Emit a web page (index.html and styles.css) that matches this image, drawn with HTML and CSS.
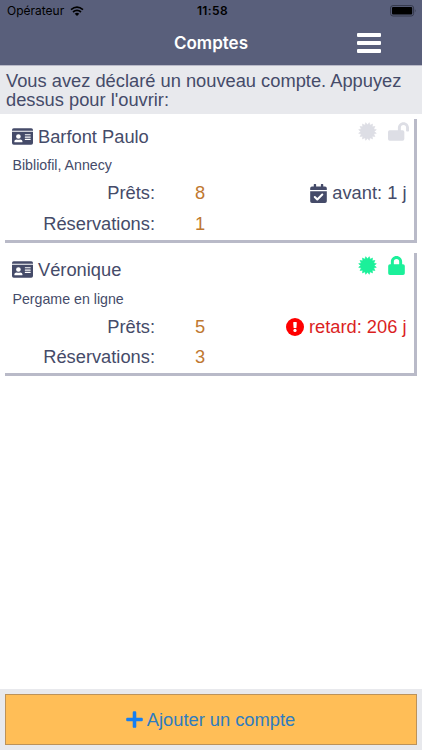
FILE: index.html
```html
<!DOCTYPE html>
<html lang="fr">
  <head>
    <meta charset="utf-8">
    <meta name="viewport" content="width=device-width, initial-scale=1">
    <title>Comptes</title>
    <link rel="stylesheet" href="styles.css">
  </head>
  <body>
    <!-- shared icons -->
    <svg class="sprite" width="0" height="0">
      <symbol id="id-card" viewBox="0 0 576 512">
        <path fill-rule="evenodd" d="M48 32h480a48 48 0 0 1 48 48v16H0V80a48 48 0 0 1 48-48zM0 128h576v304a48 48 0 0 1-48 48H48a48 48 0 0 1-48-48zM176 192a64 64 0 1 0 0 128 64 64 0 0 0 0-128zM64 400c0 9 7 16 16 16h192c9 0 16-7 16-16 0-38-29-60-66-60-14 4-30 8-46 8s-32-4-46-8c-37 0-66 22-66 60zM360 192h144q8 0 8 8v16q0 8-8 8H360q-8 0-8-8v-16q0-8 8-8zM360 256h144q8 0 8 8v16q0 8-8 8H360q-8 0-8-8v-16q0-8 8-8zM360 320h144q8 0 8 8v16q0 8-8 8H360q-8 0-8-8v-16q0-8 8-8z"/>
      </symbol>
      <symbol id="seal" viewBox="-10 -10 20 20">
        <path stroke-width=".6" stroke-linejoin="round" stroke="currentColor" d="M0-7.1L1.9-9.3L2.7-6.5L5.3-7.9L5-5L7.9-5.3L6.5-2.7L9.3-1.9L7.1 0L9.3 1.9L6.5 2.7L7.9 5.3L5 5L5.3 7.9L2.7 6.5L1.9 9.3L0 7.1L-1.9 9.3L-2.7 6.5L-5.3 7.9L-5 5L-7.9 5.3L-6.5 2.7L-9.3 1.9L-7.1 0L-9.3-1.9L-6.5-2.7L-7.9-5.3L-5-5L-5.3-7.9L-2.7-6.5L-1.9-9.3z"/>
      </symbol>
      <symbol id="lock" viewBox="0 0 448 512">
        <path fill-rule="evenodd" d="M400 224h-24v-72C376 68 308 0 224 0S72 68 72 152v72H48a48 48 0 0 0-48 48v192a48 48 0 0 0 48 48h352a48 48 0 0 0 48-48V272a48 48 0 0 0-48-48zm-104 0H152v-72a72 72 0 0 1 144 0z"/>
      </symbol>
      <symbol id="lock-open" viewBox="0 0 576 512">
        <path d="M424 0c-84 0-152 69-152 153v71H48a48 48 0 0 0-48 48v192a48 48 0 0 0 48 48h352a48 48 0 0 0 48-48V272a48 48 0 0 0-48-48h-48v-71a72 72 0 0 1 144-1v80c0 13 11 24 24 24h32c13 0 24-11 24-24v-80C576 68 508 0 424 0z"/>
      </symbol>
      <symbol id="calendar" viewBox="0 0 448 512">
        <path d="M48 64h48V12q0-12 12-12h40q12 0 12 12v52h128V12q0-12 12-12h40q12 0 12 12v52h48a48 48 0 0 1 48 48v48H0v-48a48 48 0 0 1 48-48zM0 192h448v272a48 48 0 0 1-48 48H48a48 48 0 0 1-48-48z"/>
        <path fill="none" stroke="#fff" stroke-width="56" stroke-linecap="round" stroke-linejoin="round" d="M124 350l68 68 134-134"/>
      </symbol>
      <symbol id="alert" viewBox="0 0 512 512">
        <circle cx="256" cy="256" r="256"/>
        <path fill="#fff" d="M218 116h76q12 0 12 13l-8 144q-1 12-12 12h-60q-11 0-12-12l-8-144q0-13 12-13z"/>
        <circle cx="256" cy="352" r="46" fill="#fff"/>
      </symbol>
      <symbol id="plus" viewBox="0 0 448 512">
        <path d="M416 208H272V64q0-32-32-32h-32q-32 0-32 32v144H32q-32 0-32 32v32q0 32 32 32h144v144q0 32 32 32h32q32 0 32-32V304h144q32 0 32-32v-32q0-32-32-32z"/>
      </symbol>
    </svg>

    <header class="header">
      <div class="status-bar">
        <div class="carrier">
          Opérateur
          <svg class="wifi" viewBox="0 0 14 10">
            <path d="M1 3.6Q7-1.4 13 3.6M3 6Q7 2.7 11 6"/>
            <path class="wifi-dot" d="M4.7 7.7Q7 5.8 9.3 7.7L7 10z"/>
          </svg>
        </div>
        <div class="clock">11:58</div>
        <div class="battery">
          <svg width="27" height="12" viewBox="0 0 27 12">
            <rect x=".6" y=".6" width="23" height="10.4" rx="2.4" fill="none" stroke="#34384b"/>
            <rect x="2" y="2" width="20.2" height="7.6" rx="1"/>
            <path d="M24.9 4q1.4 1.8 0 3.6z" fill="#34384b"/>
          </svg>
        </div>
      </div>
      <div class="nav">
        <h1 class="title">Comptes</h1>
        <button class="menu-btn" aria-label="Menu">
          <span></span>
          <span></span>
          <span></span>
        </button>
      </div>
    </header>

    <p class="notice">Vous avez déclaré un nouveau compte. Appuyez dessus pour l'ouvrir:</p>

    <main class="accounts">
      <section class="card">
        <div class="card-head">
          <svg class="icon id-icon"><use href="#id-card"/></svg>
          <h2 class="name">Barfont Paulo</h2>
          <div class="state">
            <svg class="icon seal"><use href="#seal"/></svg>
            <svg class="icon lock-open"><use href="#lock-open"/></svg>
          </div>
        </div>
        <p class="library">Bibliofil, Annecy</p>
        <div class="row">
          <span class="label">Prêts:</span>
          <span class="count">8</span>
          <span class="due"><svg class="icon calendar"><use href="#calendar"/></svg><span class="due-text">avant: 1 j</span></span>
        </div>
        <div class="row">
          <span class="label">Réservations:</span>
          <span class="count">1</span>
        </div>
      </section>

      <section class="card">
        <div class="card-head">
          <svg class="icon id-icon"><use href="#id-card"/></svg>
          <h2 class="name">Véronique</h2>
          <div class="state active">
            <svg class="icon seal"><use href="#seal"/></svg>
            <svg class="icon lock"><use href="#lock"/></svg>
          </div>
        </div>
        <p class="library">Pergame en ligne</p>
        <div class="row">
          <span class="label">Prêts:</span>
          <span class="count">5</span>
          <span class="due late"><svg class="icon alert"><use href="#alert"/></svg><span class="due-text">retard: 206 j</span></span>
        </div>
        <div class="row">
          <span class="label">Réservations:</span>
          <span class="count">3</span>
        </div>
      </section>
    </main>

    <footer class="footer">
      <button class="add-btn">
        <svg class="icon plus"><use href="#plus"/></svg>
        <span class="add-text">Ajouter un compte</span>
      </button>
    </footer>
  </body>
</html>
```
FILE: styles.css
```css
* {
  box-sizing: border-box;
}

body {
  height: 100vh;
  margin: 0;
  display: flex;
  flex-direction: column;
  overflow: hidden;
  background-color: #fff;
  color: #454b69;
  font-family: "Liberation Sans", Arial, sans-serif;
  font-size: 18.3px;
}

h1,
h2,
p {
  margin: 0;
  font-weight: normal;
}

button {
  padding: 0;
  font-family: inherit;
  cursor: pointer;
}

.sprite {
  display: none;
}

.icon {
  display: block;
  flex: none;
  fill: currentColor;
}

/* header */
.header {
  height: 66px;
  flex: none;
  background-color: #595f7b;
  border-bottom: 1px solid #b9bac8;
  font-family: Inter, sans-serif;
}

.status-bar {
  height: 21px;
  padding: 0 5px 0 7px;
  display: grid;
  grid-template-columns: 1fr auto 1fr;
  align-items: center;
  color: #000;
  font-size: 12px;
}

.carrier {
  display: flex;
  align-items: center;
  gap: 6px;
}

.wifi {
  width: 14px;
  height: 10px;
  fill: none;
  stroke: #000;
  stroke-width: 1.7;
}

.wifi-dot {
  fill: #000;
  stroke: none;
}

.clock {
  margin-left: 1px;
  font-weight: 600;
  letter-spacing: 0.4px;
}

.battery {
  display: flex;
  justify-content: flex-end;
}

.nav {
  height: 44px;
  padding-right: 41px;
  display: grid;
  grid-template-columns: 1fr auto 1fr;
  align-items: center;
}

.title {
  grid-column: 2;
  margin-left: 41px;
  color: #fff;
  font-size: 17px;
  font-weight: 600;
}

.menu-btn {
  width: 24px;
  justify-self: end;
  display: flex;
  flex-direction: column;
  gap: 4px;
  border: none;
  background: none;
}

.menu-btn span {
  height: 4px;
  border-radius: 1px;
  background-color: #fff;
}

.notice {
  height: 48px;
  flex: none;
  padding: 5px 6px;
  background-color: #e8e9ed;
  line-height: 19px;
}

/* accounts */
.accounts {
  flex: 1;
  padding: 5px;
  display: flex;
  flex-direction: column;
  gap: 10px;
}

.card {
  height: 123.5px;
  padding: 2px 7.5px 0;
  border-right: 3px solid #b9bac8;
  border-bottom: 3px solid #b9bac8;
}

.card-head {
  height: 31px;
  display: flex;
  align-items: center;
}

.id-icon {
  width: 21px;
  height: 19px;
  margin: 0 5px 1px -0.5px;
}

.name {
  font-size: 18.3px;
}

.state {
  width: 49px;
  height: 27px;
  margin-left: auto;
  padding-top: 1px;
  align-self: flex-start;
  display: flex;
  gap: 11px;
  color: #dddee5;
}

.active {
  color: #1bf09a;
}

.seal {
  width: 19px;
  height: 19px;
}

.lock {
  width: 17px;
  height: 19px;
}

.lock-open {
  width: 21px;
  height: 19px;
}

.library {
  height: 26px;
  font-size: 14.2px;
  line-height: 26px;
}

.row {
  height: 30.5px;
  display: grid;
  grid-template-columns: 142.5px 40px 1fr;
  align-items: center;
}

.label {
  text-align: right;
}

.count {
  padding-left: 40px;
  color: #bf7830;
}

.due {
  display: flex;
  justify-content: flex-end;
  align-items: center;
  gap: 5px;
}

.calendar {
  width: 17px;
  height: 19px;
}

.late {
  color: #f00;
}

.late .due-text {
  color: #db1f1f;
}

.alert {
  width: 18px;
  height: 18px;
}

/* footer */
.footer {
  height: 61.5px;
  flex: none;
  padding: 5px 5px 5.5px;
  background-color: #e8e9ed;
}

.add-btn {
  width: 100%;
  height: 51px;
  padding-right: 1px;
  display: flex;
  justify-content: center;
  align-items: center;
  gap: 4px;
  border: 1px solid #bc9259;
  background-color: #ffbe57;
  color: #167ff1;
  font-size: 18.3px;
}

.add-text {
  padding-top: 1px;
  color: #2e7cc0;
}

.plus {
  width: 17px;
  height: 19px;
}
```
